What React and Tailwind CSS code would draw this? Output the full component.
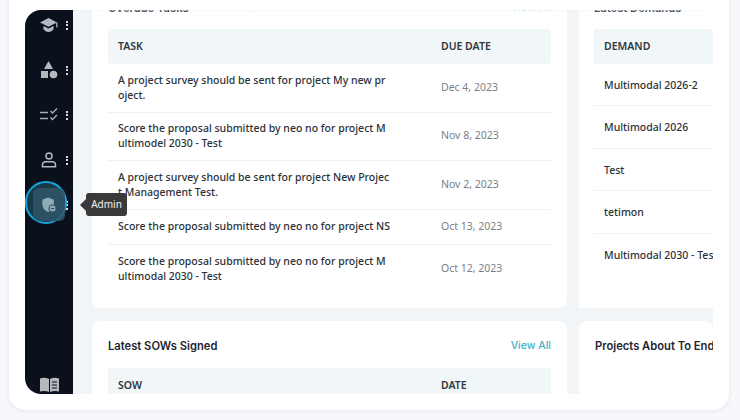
import React from 'react';

const tasks = [
  { text: 'A project survey should be sent for project My new project.', date: 'Dec 4, 2023', h: 'h-[48.5px]' },
  { text: 'Score the proposal submitted by neo no for project Multimodel 2030 - Test', date: 'Nov 8, 2023', h: 'h-[48.5px]' },
  { text: 'A project survey should be sent for project New Project Management Test.', date: 'Nov 2, 2023', h: 'h-[48.5px]' },
  { text: 'Score the proposal submitted by neo no for project NS', date: 'Oct 13, 2023', h: 'h-[35px]' },
  { text: 'Score the proposal submitted by neo no for project Multimodal 2030 - Test', date: 'Oct 12, 2023', h: 'h-[48.5px]' },
];

const demands = ['Multimodal 2026-2', 'Multimodal 2026', 'Test', 'tetimon', 'Multimodal 2030 - Test'];

const Dots = () => (
  <span className="flex flex-col gap-[1.5px] ml-[8px]">
    <i className="block w-[2px] h-[2px] bg-[#d9dcdf]" />
    <i className="block w-[2px] h-[2px] bg-[#d9dcdf]" />
    <i className="block w-[2px] h-[2px] bg-[#d9dcdf]" />
  </span>
);

const CapIcon = () => (
  <svg width="18" height="16" viewBox="0 0 18 16" fill="#b5b9bd">
    <path d="M8.5 1 L17 5.4 L8.5 9.8 L0 5.4 Z" />
    <path d="M3.4 9 L8.5 11.6 L13.6 9 V12 C12.4 14 10.4 15 8.5 15 C6.6 15 4.6 14 3.4 12 Z" />
    <rect x="16.2" y="5.4" width="1.3" height="5" />
  </svg>
);

const ShapesIcon = () => (
  <svg width="18" height="18" viewBox="0 0 18 18" fill="#b5b9bd">
    <path d="M8.5 0 L13 8 H4 Z" />
    <rect x="1" y="10" width="7" height="7" />
    <circle cx="13.5" cy="13.5" r="3.8" />
  </svg>
);

const ListCheckIcon = () => (
  <svg width="18" height="14" viewBox="0 0 18 14" fill="none" stroke="#a9adb2" strokeWidth="1.4">
    <path d="M0 4.5 H8 M0 10.5 H8" />
    <path d="M10.5 3 L12.5 5 L17 0.5 M10.5 9.5 L12.5 11.5 L17 7" />
  </svg>
);

const UserIcon = () => (
  <svg width="16" height="16" viewBox="0 0 16 16" fill="none" stroke="#b5b9bd" strokeWidth="1.5">
    <circle cx="8" cy="4" r="3" />
    <path d="M1.5 14.7 V12.8 C1.5 11 3 9.8 5 9.8 H11 C13 9.8 14.5 11 14.5 12.8 V14.7 Z" />
  </svg>
);

const ShieldIcon = () => (
  <svg width="16" height="16" viewBox="0 0 18 18">
    <path d="M8 0.5 L14.5 3 V8 C14.5 12 12 15.5 8 17 C4 15.5 1.5 12 1.5 8 V3 Z" fill="#8eabb8" />
    <circle cx="13" cy="13" r="4" fill="#8eabb8" stroke="#2f5566" strokeWidth="1.2" />
    <path d="M11 13 H15" stroke="#2f5566" strokeWidth="1.2" />
  </svg>
);

const BookIcon = () => (
  <svg width="19" height="15" viewBox="0 0 19 15" fill="#b5b9bd">
    <path d="M0 1.5 C3 0.5 6 0.5 9 2 V15 C6 13.6 3 13.6 0 14.5 Z" />
    <path d="M10 2 C13 0.5 16 0.5 19 1.5 V14.5 C16 13.6 13 13.6 10 15 Z" />
    <path d="M12 5 H17 M12 8 H17 M12 11 H17" stroke="#0a111c" strokeWidth="1" />
  </svg>
);

const NavItem = ({ children, className }) => (
  <div className={`flex items-center h-[32px] w-full pl-[15px] ${className}`}>
    <span className="w-[18px] flex justify-center">{children}</span>
    <Dots />
  </div>
);

const Sidebar = () => (
  <aside className="relative w-[48px] shrink-0 bg-[#0a111c] rounded-l-2xl flex flex-col items-center">
    <NavItem className="-mt-[1px]"><CapIcon /></NavItem>
    <NavItem className="mt-[13px]"><ShapesIcon /></NavItem>
    <NavItem className="mt-[13px]"><ListCheckIcon /></NavItem>
    <NavItem className="mt-[13px]"><UserIcon /></NavItem>
    <NavItem className="mt-[13px]"><span className="w-[16px]" /></NavItem>
    <div className="mt-auto mb-[2px]"><BookIcon /></div>

    {/* active ring over the Admin item */}
    <div className="absolute left-[8px] top-[178px] w-[32px] h-[33px] rounded-md bg-[#333a3f]" />
    <div className="absolute left-0 top-[171px] w-[42px] h-[43px] rounded-full border-[2px] border-[#12a5dc] bg-[#1c4556]/80" />
    <div className="absolute left-[8px] top-[178px] w-[32px] h-[33px] rounded-md bg-[#2f5566]/80 flex items-center justify-center">
      <ShieldIcon />
    </div>
    <div className="absolute left-[61px] top-[183px] z-10 h-[23px] w-[41px] text-center bg-[#3a3a3a] rounded-[3px] text-[#f2f2f2] text-[10px] leading-[23px]">
      <span className="absolute left-[-6px] top-[6px] w-0 h-0 border-y-[6px] border-y-transparent border-r-[6px] border-r-[#3a3a3a]" />
      Admin
    </div>
  </aside>
);

const Th = ({ className, children }) => (
  <div className={`${className} text-[10.5px] font-semibold text-[#30363d] px-[10px]`}>{children}</div>
);

const TasksCard = () => (
  <div className="w-[475px] shrink-0 h-[326px] bg-white rounded-lg px-[16px] pt-[14px]">
    <div className="flex justify-between items-center h-[24px] mb-[9px] font-['Inter',sans-serif]">
      <span className="text-[11.2px] font-semibold text-[#1d2530]">Overdue Tasks</span>
      <span className="text-[10.5px] font-medium text-[#a4ecf5]">View All</span>
    </div>
    <div className="flex items-center h-[35px] bg-[#f1f6f9] rounded-sm">
      <Th className="w-[323px]">TASK</Th>
      <Th className="flex-1">DUE DATE</Th>
    </div>
    {tasks.map((t, i) => (
      <div key={i} className={`flex items-center ${t.h} ${i < 4 ? 'border-b border-[#eef1f4]' : ''}`}>
        <div className="w-[323px] pl-[10px]">
          <p className="w-[272px] break-all text-[10.5px] leading-[15px] font-medium text-[#2b3138]">{t.text}</p>
        </div>
        <div className="flex-1 pl-[10px] text-[10.5px] text-[#7b8087]">{t.date}</div>
      </div>
    ))}
  </div>
);

const DemandsCard = () => (
  <div className="flex-1 min-w-0 h-[326px] bg-white rounded-tr-lg pl-[15px] pt-[14px] overflow-hidden">
    <div className="flex items-center h-[24px] mb-[9px] font-['Inter',sans-serif]">
      <span className="text-[11.2px] font-semibold text-[#1d2530] whitespace-nowrap">Latest Demands</span>
    </div>
    <div className="flex items-center h-[35px] bg-[#f1f6f9]">
      <Th>DEMAND</Th>
    </div>
    {demands.map((d, i) => (
      <div key={d} className={`flex items-center h-[42.4px] pl-[10px] pt-[2px] text-[10.5px] font-medium text-[#2b3138] whitespace-nowrap ${i < 4 ? 'border-b border-[#eef1f4]' : ''}`}>
        {d}
      </div>
    ))}
  </div>
);

const SowCard = () => (
  <div className="w-[475px] shrink-0 h-[100px] bg-white rounded-t-lg px-[16px] pt-[13px]">
    <div className="flex justify-between items-center h-[24px] mb-[10px] font-['Inter',sans-serif]">
      <span className="text-[11.2px] font-semibold text-[#1d2530]">Latest SOWs Signed</span>
      <span className="text-[10.5px] font-medium text-[#3fb0c6]">View All</span>
    </div>
    <div className="flex items-center h-[35px] bg-[#f1f6f9]">
      <Th className="w-[323px]">SOW</Th>
      <Th className="flex-1">DATE</Th>
    </div>
  </div>
);

const EndingCard = () => (
  <div className="flex-1 min-w-0 h-[100px] bg-white rounded-t-lg pl-[16px] pt-[13px] overflow-hidden">
    <div className="flex items-center h-[24px] font-['Inter',sans-serif]">
      <span className="text-[11.2px] font-semibold text-[#1d2530] whitespace-nowrap">Projects About To End</span>
    </div>
  </div>
);

export default function App() {
  return (
    <div className="h-[420px] w-[740px] overflow-hidden bg-[#f6f8fb] font-['Noto_Sans',sans-serif]">
      <div className="ml-[9px] w-[720px] h-[410px] bg-white rounded-b-2xl shadow-[0_1px_4px_rgba(0,0,0,0.08)] pt-[10px] px-[16px]">
        <div className="flex h-[384px]">
          <Sidebar />
          <main className="relative flex-1 min-w-0 bg-[#f1f5f8] overflow-hidden rounded-r-xl pl-[19px]">
            <div className="-mt-[28px] flex gap-[12px]">
              <TasksCard />
              <DemandsCard />
            </div>
            <div className="mt-[13px] flex gap-[12px]">
              <SowCard />
              <EndingCard />
            </div>
            <div className="absolute inset-x-0 top-0 h-[3px] bg-gradient-to-b from-[#eef1f4]/40 to-transparent" />
          </main>
        </div>
      </div>
    </div>
  );
}
